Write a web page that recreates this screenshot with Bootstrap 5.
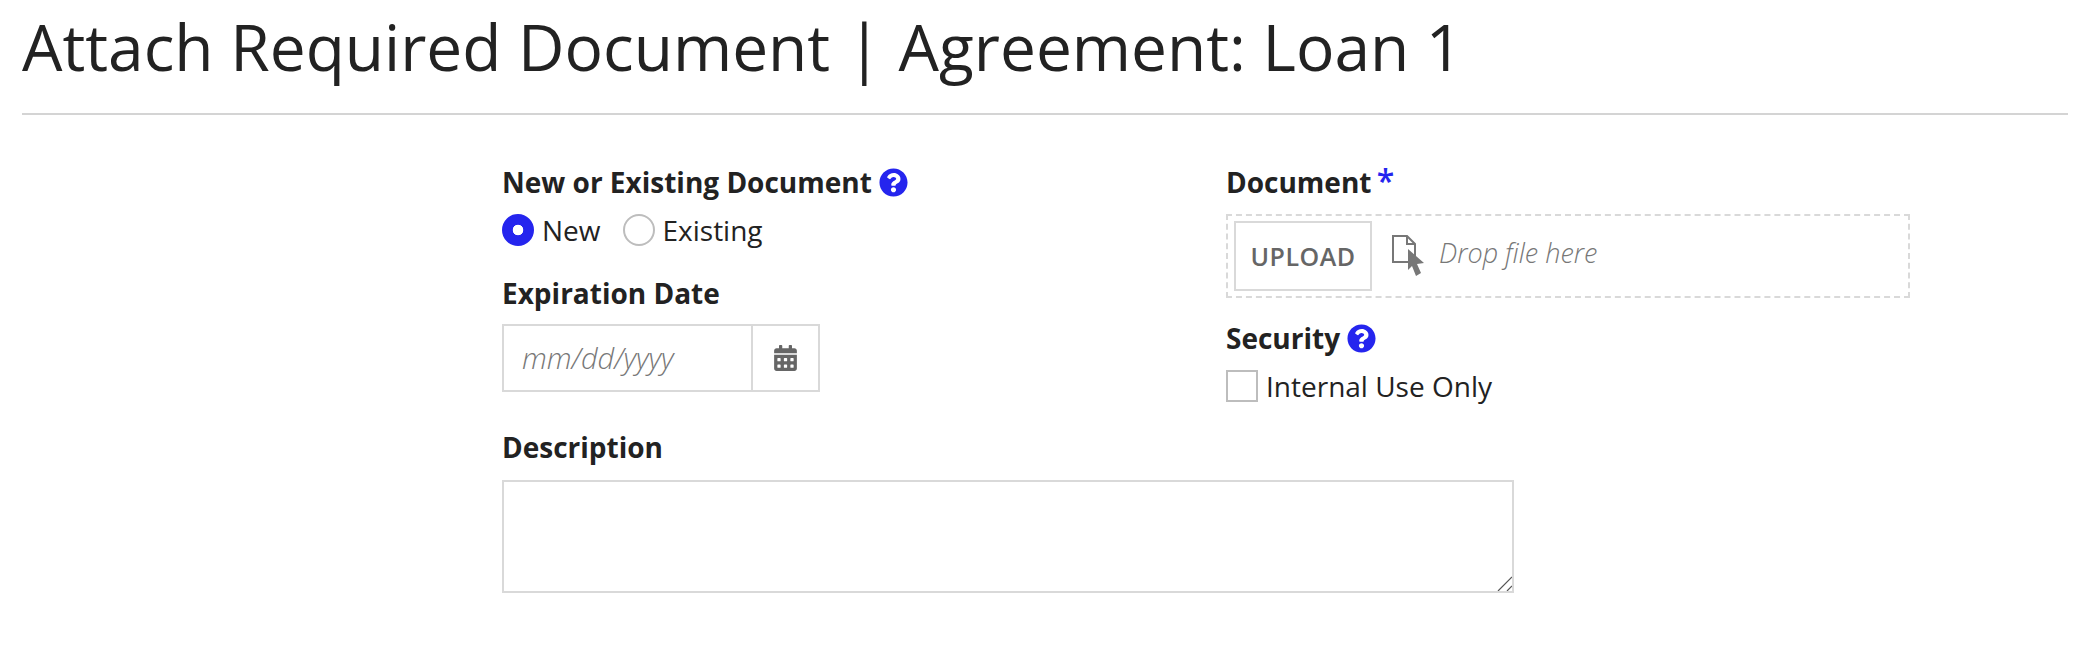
<!DOCTYPE html>
<html lang="en">
<head>
  <meta charset="UTF-8">
  <title>Attach Required Document</title>
  <link href="https://cdn.jsdelivr.net/npm/bootstrap@5.3.0/dist/css/bootstrap.min.css" rel="stylesheet">
  <style>
    body {
      font-family: "Open Sans", sans-serif;
      color: #222;
      background: #fff;
      font-size: 28px;
      line-height: 36px;
      padding: 0 22px;
    }
    .page-title {
      font-size: 64px;
      font-weight: 400;
      line-height: 90px;
      margin: 0;
      padding: 2px 0 21px;
      border-bottom: 2px solid #d4d4d4;
    }
    .form-area {
      padding: 49px 0 0 480px;
    }
    .left-side {
      width: 724px;
    }
    .right-side {
      width: 684px;
    }
    .field-label {
      font-weight: 700;
      font-size: 28px;
      line-height: 36px;
      margin: 0;
    }
    .date-label {
      margin-top: 27px;
    }
    .help-icon {
      width: 29px;
      height: 29px;
      fill: #2525ee;
      vertical-align: -4px;
    }
    .req-mark {
      color: #2525ee;
      font-size: 32px;
      font-weight: 600;
      line-height: 1;
      margin-left: -2px;
    }
    .choice-row {
      height: 36px;
      margin-top: 12px;
    }
    .form-check-input.pick-radio,
    .form-check-input.pick-box {
      width: 32px;
      height: 32px;
      margin: 0;
      border: 2px solid #bdbdbd;
      flex-shrink: 0;
    }
    .form-check-input.pick-box {
      border-radius: 0;
    }
    .form-check-input.pick-radio:checked {
      background-color: #2525ee;
      border-color: #2525ee;
      background-image: radial-gradient(circle, #fff 5px, transparent 5.6px);
    }
    .form-check-input.second-pick {
      margin-left: 22px;
    }
    .choice-text {
      margin: 0 0 0 8px;
    }
    .date-box {
      width: 318px;
      height: 68px;
      border: 2px solid #d9d9d9;
      margin-top: 13px;
    }
    .date-box input {
      width: 249px;
      border: 0;
      border-right: 2px solid #d9d9d9;
      outline: 0;
      padding: 0 18px;
      font-size: 29px;
      font-family: inherit;
    }
    .date-box input::placeholder {
      color: #777;
      font-style: italic;
      font-weight: 300;
    }
    .date-icon {
      width: 23px;
      height: 26px;
      fill: #666;
    }
    .drop-zone {
      height: 84px;
      border: 2px dashed #d9d9d9;
      margin-top: 14px;
      padding: 0 6px;
    }
    .upload-btn {
      width: 138px;
      height: 70px;
      border: 2px solid #d9d9d9;
      background: #fff;
      color: #666;
      font-size: 25px;
      font-weight: 600;
      letter-spacing: .5px;
    }
    .file-icon {
      width: 33px;
      height: 42px;
      margin-left: 20px;
      margin-right: 14px;
    }
    .drop-text {
      color: #777;
      font-size: 27px;
      font-style: italic;
      font-weight: 300;
      margin-top: -6px;
    }
    .security-label {
      margin-top: 22px;
    }
    .desc-area {
      width: 1012px;
      height: 113px;
      border: 2px solid #d9d9d9;
      border-radius: 0;
      display: block;
      margin-top: 15px;
      outline: 0;
    }
    .desc-area::-webkit-resizer {
      background: url("data:image/svg+xml,%3Csvg xmlns='http://www.w3.org/2000/svg' width='15' height='15'%3E%3Cpath d='M1 15L15 1M10 15l5-5' stroke='%23555' stroke-width='1.2'/%3E%3C/svg%3E") no-repeat;
    }
    .desc-label {
      margin-top: 25px;
    }
  </style>
</head>
<body>
  <h1 class="page-title">Attach Required Document | Agreement: Loan 1</h1>

  <form class="form-area">
    <div class="d-flex">
      <div class="left-side">
        <p class="field-label">New or Existing Document
          <svg class="help-icon" viewBox="0 0 512 512"><path d="M504 256c0 136.997-111.043 248-248 248S8 392.997 8 256C8 119.083 119.043 8 256 8s248 111.083 248 248zM262.655 90c-54.497 0-89.255 22.957-116.549 63.758-3.536 5.286-2.353 12.415 2.715 16.258l34.699 26.31c5.205 3.947 12.621 3.008 16.665-2.122 17.864-22.658 30.113-35.797 57.303-35.797 20.429 0 45.698 13.148 45.698 32.958 0 14.976-12.363 22.667-32.534 33.976C247.128 238.528 216 254.941 216 296v4c0 6.627 5.373 12 12 12h56c6.627 0 12-5.373 12-12v-1.333c0-28.462 83.186-29.647 83.186-106.667 0-58.002-60.165-102-116.531-102zM256 338c-25.365 0-46 20.635-46 46 0 25.364 20.635 46 46 46s46-20.636 46-46c0-25.365-20.635-46-46-46z"/></svg>
        </p>
        <div class="choice-row d-flex align-items-center">
          <input class="form-check-input pick-radio" type="radio" name="docType" id="typeNew" checked>
          <label class="choice-text" for="typeNew">New</label>
          <input class="form-check-input pick-radio second-pick" type="radio" name="docType" id="typeExisting">
          <label class="choice-text" for="typeExisting">Existing</label>
        </div>
        <p class="field-label date-label">Expiration Date</p>
        <div class="date-box d-flex">
          <input type="text" placeholder="mm/dd/yyyy">
          <div class="flex-grow-1 d-flex align-items-center justify-content-center">
            <svg class="date-icon" viewBox="0 0 448 512"><path d="M0 464c0 26.5 21.5 48 48 48h352c26.5 0 48-21.5 48-48V192H0v272zm320-196c0-6.6 5.4-12 12-12h40c6.6 0 12 5.4 12 12v40c0 6.6-5.4 12-12 12h-40c-6.6 0-12-5.4-12-12v-40zm0 128c0-6.6 5.4-12 12-12h40c6.6 0 12 5.4 12 12v40c0 6.6-5.4 12-12 12h-40c-6.6 0-12-5.4-12-12v-40zM192 268c0-6.6 5.4-12 12-12h40c6.6 0 12 5.4 12 12v40c0 6.6-5.4 12-12 12h-40c-6.6 0-12-5.4-12-12v-40zm0 128c0-6.6 5.4-12 12-12h40c6.6 0 12 5.4 12 12v40c0 6.6-5.4 12-12 12h-40c-6.6 0-12-5.4-12-12v-40zM64 268c0-6.6 5.4-12 12-12h40c6.6 0 12 5.4 12 12v40c0 6.6-5.4 12-12 12H76c-6.6 0-12-5.4-12-12v-40zm0 128c0-6.6 5.4-12 12-12h40c6.6 0 12 5.4 12 12v40c0 6.6-5.4 12-12 12H76c-6.6 0-12-5.4-12-12v-40zM400 64h-48V16c0-8.8-7.2-16-16-16h-32c-8.8 0-16 7.2-16 16v48H160V16c0-8.8-7.2-16-16-16h-32c-8.8 0-16 7.2-16 16v48H48C21.5 64 0 85.5 0 112v48h448v-48c0-26.5-21.5-48-48-48z"/></svg>
          </div>
        </div>
      </div>

      <div class="right-side">
        <p class="field-label">Document <span class="req-mark">*</span></p>
        <div class="drop-zone d-flex align-items-center">
          <button type="button" class="upload-btn">UPLOAD</button>
          <svg class="file-icon" viewBox="0 0 33 42">
            <path d="M1 1h14l8 8v18H1z" fill="none" stroke="#777" stroke-width="2"/>
            <path d="M15 1v8h8" fill="none" stroke="#777" stroke-width="2"/>
            <path d="M16 14l16 14-7 1 4 9-5 3-4-10-4 4z" fill="#777"/>
          </svg>
          <span class="drop-text">Drop file here</span>
        </div>
        <p class="field-label security-label">Security
          <svg class="help-icon" viewBox="0 0 512 512"><path d="M504 256c0 136.997-111.043 248-248 248S8 392.997 8 256C8 119.083 119.043 8 256 8s248 111.083 248 248zM262.655 90c-54.497 0-89.255 22.957-116.549 63.758-3.536 5.286-2.353 12.415 2.715 16.258l34.699 26.31c5.205 3.947 12.621 3.008 16.665-2.122 17.864-22.658 30.113-35.797 57.303-35.797 20.429 0 45.698 13.148 45.698 32.958 0 14.976-12.363 22.667-32.534 33.976C247.128 238.528 216 254.941 216 296v4c0 6.627 5.373 12 12 12h56c6.627 0 12-5.373 12-12v-1.333c0-28.462 83.186-29.647 83.186-106.667 0-58.002-60.165-102-116.531-102zM256 338c-25.365 0-46 20.635-46 46 0 25.364 20.635 46 46 46s46-20.636 46-46c0-25.365-20.635-46-46-46z"/></svg>
        </p>
        <div class="choice-row d-flex align-items-center">
          <input class="form-check-input pick-box" type="checkbox" id="internalOnly">
          <label class="choice-text" for="internalOnly">Internal Use Only</label>
        </div>
      </div>
    </div>

    <p class="field-label desc-label">Description</p>
    <textarea class="desc-area"></textarea>
  </form>

  <script src="https://cdn.jsdelivr.net/npm/bootstrap@5.3.0/dist/js/bootstrap.bundle.min.js"></script>
</body>
</html>
